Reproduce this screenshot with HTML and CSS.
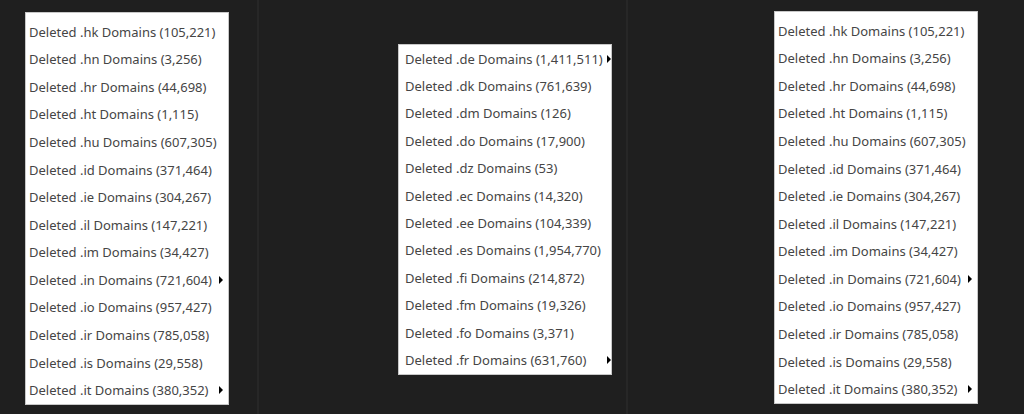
FILE: index.html
```html
<!DOCTYPE html>
<html>
<head>
<meta charset="utf-8">
<link rel="stylesheet" href="styles.css">
</head>
<body>
<div class="stage">
  <section class="col col-a">
    <ul class="menu menu-side">
      <li class="item"><span>Deleted .hk Domains (105,221)</span></li>
      <li class="item"><span>Deleted .hn Domains (3,256)</span></li>
      <li class="item"><span>Deleted .hr Domains (44,698)</span></li>
      <li class="item"><span>Deleted .ht Domains (1,115)</span></li>
      <li class="item"><span>Deleted .hu Domains (607,305)</span></li>
      <li class="item"><span>Deleted .id Domains (371,464)</span></li>
      <li class="item"><span>Deleted .ie Domains (304,267)</span></li>
      <li class="item"><span>Deleted .il Domains (147,221)</span></li>
      <li class="item"><span>Deleted .im Domains (34,427)</span></li>
      <li class="item"><span>Deleted .in Domains (721,604)</span><i class="arrow"></i></li>
      <li class="item"><span>Deleted .io Domains (957,427)</span></li>
      <li class="item"><span>Deleted .ir Domains (785,058)</span></li>
      <li class="item"><span>Deleted .is Domains (29,558)</span></li>
      <li class="item"><span>Deleted .it Domains (380,352)</span><i class="arrow"></i></li>
    </ul>
  </section>
  <div class="divider"></div>
  <section class="col col-b">
    <ul class="menu menu-mid">
      <li class="item"><span>Deleted .de Domains (1,411,511)</span><i class="arrow"></i></li>
      <li class="item"><span>Deleted .dk Domains (761,639)</span></li>
      <li class="item"><span>Deleted .dm Domains (126)</span></li>
      <li class="item"><span>Deleted .do Domains (17,900)</span></li>
      <li class="item"><span>Deleted .dz Domains (53)</span></li>
      <li class="item"><span>Deleted .ec Domains (14,320)</span></li>
      <li class="item"><span>Deleted .ee Domains (104,339)</span></li>
      <li class="item"><span>Deleted .es Domains (1,954,770)</span></li>
      <li class="item"><span>Deleted .fi Domains (214,872)</span></li>
      <li class="item"><span>Deleted .fm Domains (19,326)</span></li>
      <li class="item"><span>Deleted .fo Domains (3,371)</span></li>
      <li class="item"><span>Deleted .fr Domains (631,760)</span><i class="arrow"></i></li>
    </ul>
  </section>
  <div class="divider"></div>
  <section class="col col-c">
    <ul class="menu menu-side">
      <li class="item"><span>Deleted .hk Domains (105,221)</span></li>
      <li class="item"><span>Deleted .hn Domains (3,256)</span></li>
      <li class="item"><span>Deleted .hr Domains (44,698)</span></li>
      <li class="item"><span>Deleted .ht Domains (1,115)</span></li>
      <li class="item"><span>Deleted .hu Domains (607,305)</span></li>
      <li class="item"><span>Deleted .id Domains (371,464)</span></li>
      <li class="item"><span>Deleted .ie Domains (304,267)</span></li>
      <li class="item"><span>Deleted .il Domains (147,221)</span></li>
      <li class="item"><span>Deleted .im Domains (34,427)</span></li>
      <li class="item"><span>Deleted .in Domains (721,604)</span><i class="arrow"></i></li>
      <li class="item"><span>Deleted .io Domains (957,427)</span></li>
      <li class="item"><span>Deleted .ir Domains (785,058)</span></li>
      <li class="item"><span>Deleted .is Domains (29,558)</span></li>
      <li class="item"><span>Deleted .it Domains (380,352)</span><i class="arrow"></i></li>
    </ul>
  </section>
</div>
</body>
</html>
```

FILE: styles.css
```css
* { box-sizing: border-box; }
html, body {
  margin: 0;
  padding: 0;
  width: 1024px;
  height: 414px;
  overflow: hidden;
  background: #1f1f1f;
  font-family: "Noto Sans", "Open Sans", sans-serif;
}
.stage {
  display: flex;
  height: 414px;
}
.col { flex: none; }
.col-a { width: 257px; padding: 12px 0 0 25px; }
.col-b { width: 367px; padding: 44px 0 0 139px; }
.col-c { width: 396px; padding: 11px 0 0 146px; }
.divider {
  flex: none;
  width: 2px;
  height: 414px;
  background: #272727;
}
.menu {
  list-style: none;
  margin: 0;
  background: #ffffff;
  border: 1px solid #c8c8c8;
}
.menu-side { width: 204px; padding: 5px 0 0 0; }
.menu-mid { width: 214px; padding: 0; }
.item {
  display: flex;
  align-items: center;
  justify-content: space-between;
  font-size: 13px;
  color: #454545;
  white-space: nowrap;
}
.menu-side .item { height: 27.57px; padding: 0 5px 0 3px; }
.menu-mid .item { height: 27.4px; padding: 0 0 0 6px; }
.arrow {
  display: block;
  flex: none;
  width: 0;
  height: 0;
  border-top: 4px solid transparent;
  border-bottom: 4px solid transparent;
  border-left: 4px solid #000;
}
```
